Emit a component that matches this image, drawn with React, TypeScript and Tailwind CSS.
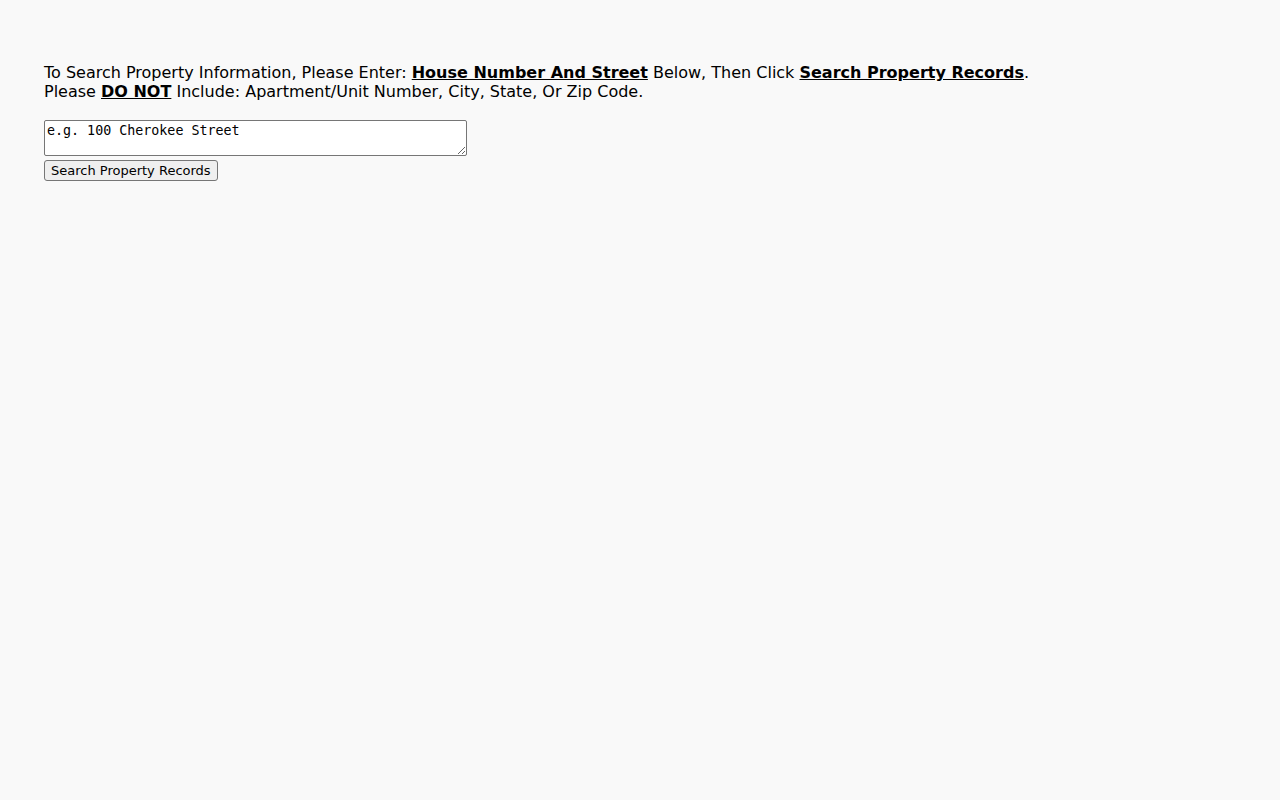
export default function App() {
  return (
    <div className="min-h-[800px] bg-[#f9f9f9] px-[44px] pt-[63px] text-black">
      <p className="font-['DejaVu_Sans',sans-serif] text-[16px] leading-[19px]">
        To Search Property Information, Please Enter: <b className="underline">House Number And Street</b> Below, Then Click{' '}
        <b className="underline">Search Property Records</b>.
        <br />
        Please <b className="underline">DO NOT</b> Include: Apartment/Unit Number, City, State, Or Zip Code.
      </p>
      <div className="mt-[19px] flex flex-col items-start gap-[4px]">
        <textarea
          defaultValue="e.g. 100 Cherokee Street"
          className="block h-[36px] w-[423px] rounded-[2px] border border-[#767676] bg-white px-[2px] py-[2px] font-['DejaVu_Sans_Mono',monospace] text-[13.333px] leading-[16px] text-black"
        />
        <button className="h-[21px] rounded-[3px] border border-[#767676] bg-[#efefef] px-[6px] font-['DejaVu_Sans',sans-serif] text-[13px] leading-[15px] text-black">
          Search Property Records
        </button>
      </div>
    </div>
  )
}
